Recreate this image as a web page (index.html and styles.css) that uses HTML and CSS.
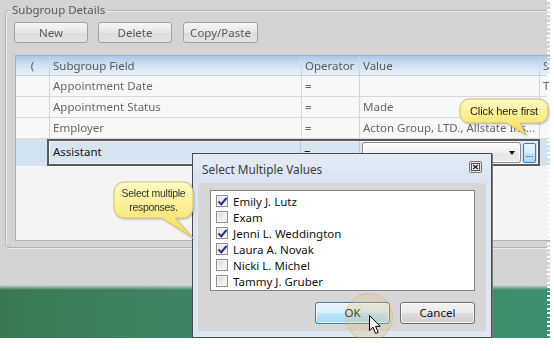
FILE: index.html
```html
<!DOCTYPE html>
<html>
<head>
<meta charset="utf-8">
<link rel="stylesheet" href="styles.css">
</head>
<body>
<div class="screen">
  <div class="group">
    <div class="group-label blur">Subgroup Details</div>
    <div class="toolbar blur">
      <div class="btn w74">New</div>
      <div class="btn w74">Delete</div>
      <div class="btn w75">Copy/Paste</div>
    </div>
    <div class="grid">
      <div class="row head blur">
        <div class="c c1 center">(</div><div class="c c2">Subgroup Field</div><div class="c c3">Operator</div><div class="c c4">Value</div><div class="c c5">S</div>
      </div>
      <div class="row blur">
        <div class="c c1"></div><div class="c c2">Appointment Date</div><div class="c c3">=</div><div class="c c4"></div><div class="c c5">T</div>
      </div>
      <div class="row blur">
        <div class="c c1"></div><div class="c c2">Appointment Status</div><div class="c c3">=</div><div class="c c4">Made</div><div class="c c5"></div>
      </div>
      <div class="row blur">
        <div class="c c1"></div><div class="c c2">Employer</div><div class="c c3">=</div><div class="c c4">Acton Group, LTD., Allstate Ins...</div><div class="c c5"></div>
      </div>
      <div class="row sel">
        <div class="selpre blur"></div>
        <div class="edit">
          <div class="e e2">Assistant</div>
          <div class="e e3">=</div>
          <div class="e e4">
            <div class="combo"><span class="arrow"></span></div>
            <div class="dots"><span>...</span></div>
          </div>
        </div>
        <div class="selpost blur"></div>
      </div>
      <div class="grid-empty blur"></div>
    </div>
  </div>
  <div class="green"></div>
  <div class="torn"></div>

  <div class="dialog">
    <div class="dtitle">
      <span>Select Multiple Values</span>
      <svg class="close" width="13" height="12" viewBox="0 0 13 12">
        <rect x="0.5" y="0.5" width="12" height="11" rx="1.5" fill="#e2e2e2" stroke="#7a7a7a"/>
        <rect x="2.5" y="2.5" width="8" height="7" fill="#f7f7f7" stroke="#555"/>
        <path d="M4 4 L9 8 M9 4 L4 8" stroke="#222" stroke-width="1.4"/>
      </svg>
    </div>
    <div class="dbody">
      <div class="list">
        <div class="item"><span class="cb on"></span>Emily J. Lutz</div>
        <div class="item"><span class="cb"></span>Exam</div>
        <div class="item"><span class="cb on"></span>Jenni L. Weddington</div>
        <div class="item"><span class="cb on"></span>Laura A. Novak</div>
        <div class="item"><span class="cb"></span>Nicki L. Michel</div>
        <div class="item"><span class="cb"></span>Tammy J. Gruber</div>
      </div>
      <div class="dbtns">
        <div class="dbtn ok">OK</div>
        <div class="dbtn">Cancel</div>
      </div>
    </div>
  </div>

  <div class="callout c-first">
    <svg width="94" height="42" viewBox="0 0 94 42">
      <defs>
        <linearGradient id="yg1" x1="0" y1="0" x2="0" y2="1">
          <stop offset="0" stop-color="#fffbc4"/>
          <stop offset="1" stop-color="#f6dc52"/>
        </linearGradient>
      </defs>
      <path d="M11 2 H81 A9 9 0 0 1 90 11 V17 A9 9 0 0 1 81 26 H62 L68 38 L49 26 H11 A9 9 0 0 1 2 17 V11 A9 9 0 0 1 11 2 Z" fill="url(#yg1)" stroke="#cfc07a"/>
    </svg>
    <div class="ctext t1">Click here first</div>
  </div>

  <div class="callout c-multi">
    <svg width="86" height="60" viewBox="0 0 86 60">
      <defs>
        <linearGradient id="yg2" x1="0" y1="0" x2="0" y2="1">
          <stop offset="0" stop-color="#fffbc4"/>
          <stop offset="1" stop-color="#f6dc52"/>
        </linearGradient>
      </defs>
      <path d="M12 2 H71 A10 10 0 0 1 81 12 V28 A10 10 0 0 1 71 38 H63 L81 58 L50 38 H12 A10 10 0 0 1 2 28 V12 A10 10 0 0 1 12 2 Z" fill="url(#yg2)" stroke="#cfc07a"/>
    </svg>
    <div class="ctext t2">Select multiple<br>responses.</div>
  </div>

  <div class="halo"></div>
  <svg class="cursor" width="13" height="20" viewBox="0 0 13 20">
    <path d="M0.5 0.5 L0.5 15.5 L4 12.2 L6.6 18.5 L9.2 17.4 L6.6 11.3 L11.2 11.3 Z" fill="#fff" stroke="#000" stroke-linejoin="round"/>
  </svg>
</div>
</body>
</html>
```

FILE: styles.css
```css
* { box-sizing: border-box; }
html, body { margin: 0; padding: 0; }
body {
  width: 554px;
  height: 351px;
  background: #ffffff;
  overflow: hidden;
  font-family: "Noto Sans", "Open Sans", sans-serif;
  font-size: 11.5px;
  color: #111;
}
.screen {
  position: relative;
  width: 550px;
  height: 338px;
  background: #d4d4d4;
  overflow: hidden;
  display: flex;
  flex-direction: column;
}
.blur { filter: blur(0.7px); }

/* group box */
.group {
  margin: 10px 0 0 5px;
  width: 620px;
  height: 238px;
  flex: none;
  border: 1px solid #b4b4b4;
  border-radius: 4px 0 0 4px;
  box-shadow: inset 1px 1px 0 #efefef, 1px 1px 0 #ececec;
  padding: 0 0 0 8px;
  display: flex;
  flex-direction: column;
  align-items: flex-start;
}
.group-label {
  margin: -8px 0 0 -4px;
  padding: 0 2px;
  height: 14px;
  line-height: 14px;
  background: #d4d4d4;
  color: #5a5a5a;
}
.toolbar {
  margin-top: 5px;
  display: flex;
  gap: 10px;
}
.btn {
  height: 21px;
  line-height: 19px;
  text-align: center;
  color: #5a5a5a;
  border: 1px solid #a3a3a3;
  border-radius: 3px;
  background: linear-gradient(#f6f6f6, #e6e6e6 50%, #dcdcdc 51%, #e2e2e2);
}
.w74 { width: 74px; }
.w75 { width: 75px; margin-left: 1px; }

/* grid */
.grid {
  margin: 12px 0 0 1px;
  width: 600px;
  height: 186px;
  border: 1px solid #a9b1ba;
  background: #f5f5f5;
  display: flex;
  flex-direction: column;
}
.row {
  display: flex;
  height: 21px;
  border-bottom: 1px solid #d9d9d9;
  background: #f8f8f8;
  color: #666;
  flex: none;
}
.row.head {
  height: 20px;
  border-bottom: 1px solid #c4d3e2;
  background: linear-gradient(#a9c9e8 0%, #c8dcef 35%, #eaf2fa 100%);
  color: #5a5a5a;
}
.c {
  border-right: 1px solid #d6d6d6;
  padding-left: 3px;
  line-height: 20px;
  white-space: nowrap;
  overflow: hidden;
}
.head .c { border-right-color: #c9d7e6; line-height: 19px; }
.c1 { width: 34px; }
.c2 { width: 252px; }
.c3 { width: 58px; }
.c4 { width: 180px; }
.c5 { flex: 1; border-right: none; }
.center { text-align: center; padding-left: 0; }

.row.sel {
  height: 27px;
  border-bottom: none;
  background: transparent;
  color: #111;
}
.selpre { width: 31px; background: #d3e2f0; }
.selpost { flex: 1; background: #d3e2f0; }
.edit {
  width: 493px;
  border: 2px solid #5a5a5a;
  background: #d7e5f2;
  display: flex;
  box-shadow: inset 0 0 0 1px #eef3f9;
}
.e { line-height: 22px; padding-left: 4px; border-right: 1px solid #bcc9d8; }
.e2 { width: 252px; }
.e3 { width: 59px; padding-left: 3px; }
.e4 {
  flex: 1;
  border-right: none;
  display: flex;
  align-items: center;
  gap: 2px;
  padding-left: 2px;
}
.combo {
  position: relative;
  width: 159px;
  height: 21px;
  border: 1px solid #8c8c8c;
  border-radius: 3px;
  background: linear-gradient(#fcfcfc, #f1f1f1 50%, #e6e6e6 51%, #ececec);
  box-shadow: inset 0 0 0 1px #fff;
}
.arrow {
  position: absolute;
  right: 5px;
  top: 8px;
  width: 0;
  height: 0;
  border-left: 3.5px solid transparent;
  border-right: 3.5px solid transparent;
  border-top: 4px solid #111;
}
.dots {
  width: 13px;
  height: 20px;
  border: 1px solid #3c7fb1;
  border-radius: 2px;
  background: linear-gradient(#eaf6fd, #d5eefc 50%, #bee6fd 51%, #a9dbf6);
  display: flex;
  align-items: flex-end;
  justify-content: center;
  padding-bottom: 3px;
  font-family: "Liberation Sans", sans-serif;
  font-size: 9px;
  line-height: 9px;
  color: #111;
}
.grid-empty { flex: 1; background: #f4f4f4; }

/* green band */
.green {
  margin-top: auto;
  height: 53px;
  flex: none;
  background:
    linear-gradient(to bottom, #d4d4d4 0px, rgba(212,212,212,0) 5px),
    linear-gradient(90deg, #3a7853, #3e8565 35%, #3f8b6a 65%, #3e8f70);
}
.torn {
  position: absolute;
  right: 0;
  top: 0;
  width: 3px;
  height: 100%;
  background: repeating-linear-gradient(to bottom, #fff 0 2px, transparent 2px 5px, #fff 5px 6px, transparent 6px 9px, #fff 9px 11px, transparent 11px 13px);
}

/* dialog */
.dialog {
  position: absolute;
  left: 192px;
  top: 153px;
  width: 300px;
  height: 185px;
  border: 1px solid #4c4c4c;
  background: #dde6f2;
  display: flex;
  flex-direction: column;
  box-shadow: 1px 1px 0 #7b7b7b;
}
.dtitle {
  height: 29px;
  flex: none;
  display: flex;
  align-items: center;
  justify-content: space-between;
  padding: 0 9px 0 9px;
  color: #3d3d3d;
  font-size: 11.8px;
  background: linear-gradient(#e4ecf6, #d8e3f0);
}
.close { display: block; margin-top: -3px; }
.dbody {
  flex: 1;
  margin: 0 5px 6px 5px;
  background: #d7d7d7;
  padding: 7px 11px 0 12px;
  display: flex;
  flex-direction: column;
}
.list {
  width: 265px;
  height: 101px;
  border: 1px solid #82878f;
  background: #fff;
  padding: 2px 0 0 5px;
}
.item {
  height: 16px;
  display: flex;
  align-items: center;
  gap: 5px;
  white-space: nowrap;
}
.cb {
  width: 12px;
  height: 12px;
  flex: none;
  border: 1px solid #8e8f8f;
  background: linear-gradient(135deg, #dcdcdc, #fbfbfb);
  box-shadow: inset 0 0 0 1px #f4f4f4;
  position: relative;
}
.cb.on::after {
  content: "";
  position: absolute;
  left: 3px;
  top: 0px;
  width: 3px;
  height: 7px;
  border-right: 2px solid #27358a;
  border-bottom: 2px solid #27358a;
  transform: rotate(40deg);
}
.dbtns {
  margin-top: 11px;
  display: flex;
  justify-content: flex-end;
  gap: 10px;
}
.dbtn {
  width: 75px;
  height: 22px;
  line-height: 20px;
  text-align: center;
  border: 1px solid #707070;
  border-radius: 3px;
  background: linear-gradient(#f2f2f2, #ebebeb 50%, #dddddd 51%, #cfcfcf);
  box-shadow: inset 0 0 0 1px rgba(255,255,255,0.7);
  color: #111;
}
.dbtn.ok {
  border-color: #3c7fb1;
  background: linear-gradient(#eaf6fd, #d9f0fc 50%, #bee6fd 51%, #a7d9f5);
}

/* callouts */
.callout {
  position: absolute;
  filter: drop-shadow(1px 1px 1px rgba(0,0,0,0.22));
}
.callout svg { display: block; }
.c-first { left: 458px; top: 97px; width: 94px; height: 42px; }
.c-multi { left: 112px; top: 180px; width: 86px; height: 60px; }
.ctext {
  position: absolute;
  font-family: "Liberation Sans", Arial, sans-serif;
  color: #222;
  text-align: center;
  display: flex;
  align-items: center;
  justify-content: center;
}
.t1 { left: 2px; top: 2px; width: 88px; height: 24px; font-size: 11px; letter-spacing: -0.1px; }
.t2 { left: 2px; top: 2px; width: 79px; height: 36px; font-size: 10.5px; line-height: 14px; letter-spacing: -0.3px; color: #333; }

/* cursor */
.halo {
  position: absolute;
  left: 345px;
  top: 293px;
  width: 48px;
  height: 48px;
  border-radius: 50%;
  background: rgba(226, 186, 120, 0.28);
  border: 1px solid rgba(200, 160, 100, 0.3);
}
.cursor {
  position: absolute;
  left: 369px;
  top: 315px;
}
```
